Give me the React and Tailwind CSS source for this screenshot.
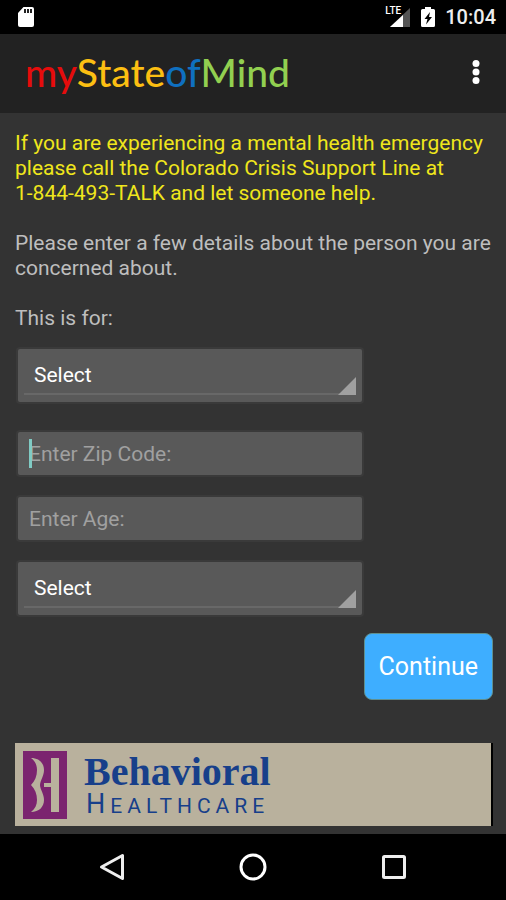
const titleParts = [
  { text: 'my', color: 'text-[#e60c0c]' },
  { text: 'State', color: 'text-[#fcbf12]' },
  { text: 'of', color: 'text-[#0f70c0]' },
  { text: 'Mind', color: 'text-[#92d050]' },
];

const fieldBox = 'w-full rounded-xs bg-[#595959] text-[21px] ring-2 ring-[#3a3a3a] outline-none';

const StatusBar = () => (
  <div className="flex h-[34px] items-center justify-between bg-black pr-[10px] pl-[17px]">
    <svg width="18" height="22" viewBox="0 0 18 22" aria-hidden="true">
      <path d="M6.5 1H15a2 2 0 0 1 2 2v16a2 2 0 0 1-2 2H3a2 2 0 0 1-2-2V7Z" fill="#fff" />
      <path d="M7 3h2v4H7zM10 3h2v4h-2zM13 3h2v4h-2z" fill="#222" />
    </svg>
    <div className="flex items-center gap-[10px]">
      <div className="relative h-[22px] w-[26px]">
        <svg width="26" height="22" viewBox="0 0 26 22" aria-hidden="true">
          <path d="M5 21 25 2V21Z" fill="#555" />
          <path d="M5 21 18 9V21Z" fill="#fff" />
        </svg>
        <span className="absolute top-0 left-0 bg-black text-[10px] leading-[10px] font-medium text-white">
          LTE
        </span>
      </div>
      <svg width="14" height="22" viewBox="0 0 14 22" aria-hidden="true">
        <path d="M4 1h6v2h2.500a1.500 1.500 0 0 1 1.500 1.500v15a1.500 1.500 0 0 1-1.500 1.500h-11A1.500 1.500 0 0 1 0 19.500v-15A1.500 1.500 0 0 1 1.500 3H4Z" fill="#fff" />
        <path d="M9 6 3.500 13H6.500L5 18.500 11 11H8Z" fill="#000" />
      </svg>
      <span className="text-[20px] leading-6 font-medium text-[#eee]">10:04</span>
    </div>
  </div>
);

const SelectField = ({ id, label }) => (
  <div className="relative">
    <select
      id={id}
      aria-label={label}
      className={`${fieldBox} block h-[53px] appearance-none px-4 text-white`}
    >
      <option>Select</option>
    </select>
    <span className="pointer-events-none absolute right-1.5 bottom-[7px] left-1.5 border-b-2 border-[#686868]" />
    <svg
      className="pointer-events-none absolute right-1.5 bottom-[7px]"
      width="18"
      height="18"
      viewBox="0 0 18 18"
      aria-hidden="true"
    >
      <path d="M18 0v18H0Z" fill="#a0a0a0" />
    </svg>
  </div>
);

const TextField = ({ id, placeholder, active }) => (
  <div className="relative">
    <input
      id={id}
      type="text"
      aria-label={placeholder}
      placeholder={placeholder}
      className={`${fieldBox} block h-[43px] px-[11px] text-white placeholder:text-[#a0a0a0]`}
    />
    {active ? <span className="absolute top-[7px] left-[11px] h-[29px] w-[3px] bg-[#80cbc4]" /> : null}
  </div>
);

const Banner = () => (
  <div className="flex h-[83px] items-center border-r-2 border-black bg-[#b9b19d] pl-2">
    <svg width="44" height="68" viewBox="0 0 44 68" aria-hidden="true">
      <path d="M0 0h44v68H0Z" fill="#7b246f" />
      <path
        d="M8 7C16 7 21 12 21 19C21 25 17 30 17 34C17 38 21 43 21 49C21 56 16 61 8 61C12 58 14 54 14 49C14 43 12 38 8 34C12 30 14 25 14 19C14 14 12 10 8 7Z"
        fill="#b9b19d"
      />
      <path d="M28 7h8v54h-8V36h-7v-4h7Z" fill="#b9b19d" />
    </svg>
    <div className="ml-[17px] text-[#173f8a]">
      <p className="font-['Liberation_Serif',serif] text-[40px] leading-10 font-bold">Behavioral</p>
      <p className="ml-0.5 text-[21px] leading-6 tracking-[5px]">
        <span className="text-[27px]">H</span>EALTHCARE
      </p>
    </div>
  </div>
);

const NavBar = () => (
  <nav className="grid h-[66px] grid-cols-[1fr_auto_1fr] items-center bg-black">
    <button type="button" aria-label="Back" className="mr-[114px] justify-self-end">
      <svg width="26" height="28" viewBox="0 0 26 28" fill="none" stroke="#eee" strokeWidth="3">
        <path d="M2.500 14 23.500 2.500V25.500Z" strokeLinejoin="round" />
      </svg>
    </button>
    <button type="button" aria-label="Home">
      <svg width="28" height="28" viewBox="0 0 28 28" fill="none" stroke="#fff" strokeWidth="3">
        <circle cx="14" cy="14" r="12" />
      </svg>
    </button>
    <button type="button" aria-label="Recent apps" className="ml-[114px] justify-self-start">
      <svg width="26" height="26" viewBox="0 0 26 26" fill="none" stroke="#eee" strokeWidth="3">
        <rect x="2.500" y="2.500" width="21" height="21" rx="1" />
      </svg>
    </button>
  </nav>
);

const App = () => (
  <div className="flex min-h-screen flex-col bg-[#333] font-[Roboto,sans-serif]">
    <StatusBar />

    <header className="flex h-[79px] items-center justify-between bg-[#222] pr-5 pb-1 pl-[25px]">
      <h1 className="font-[Lato,sans-serif] text-[39px] leading-10 font-medium">
        {titleParts.map((part) => (
          <span key={part.text} className={part.color}>
            {part.text}
          </span>
        ))}
      </h1>
      <button type="button" aria-label="More options">
        <svg width="20" height="26" viewBox="0 0 20 26" fill="#fff">
          <circle cx="10" cy="4.500" r="3.500" />
          <circle cx="10" cy="13" r="3.500" />
          <circle cx="10" cy="21.500" r="3.500" />
        </svg>
      </button>
    </header>

    <main className="flex flex-1 flex-col pt-[18px] pr-[13px] pb-2 pl-[15px] text-[21px] leading-[25px] text-[#bebebe]">
      <p className="text-[#efe61c]">
        If you are experiencing a mental health emergency please call the Colorado Crisis Support Line at
        <br />
        1-844-493-TALK and let someone help.
      </p>
      <p className="mt-[25px]">Please enter a few details about the person you are concerned about.</p>
      <label htmlFor="relation" className="mt-[25px]">
        This is for:
      </label>

      <form className="mt-[18px] flex flex-col">
        <div className="ml-[3px] flex w-[72%] flex-col gap-[22px]">
          <div className="mb-2">
            <SelectField id="relation" label="This is for:" />
          </div>
          <TextField id="zip" placeholder="Enter Zip Code:" active />
          <TextField id="age" placeholder="Enter Age:" />
          <SelectField id="gender" label="Select" />
        </div>
        <button
          type="button"
          className="mt-[18px] h-[67px] self-end rounded-lg border border-[#5f8f8f] bg-[#3eaeff] px-[14px] text-[25px] text-white"
        >
          Continue
        </button>
      </form>

      <div className="mt-auto">
        <Banner />
      </div>
    </main>

    <NavBar />
  </div>
);

export default App;
